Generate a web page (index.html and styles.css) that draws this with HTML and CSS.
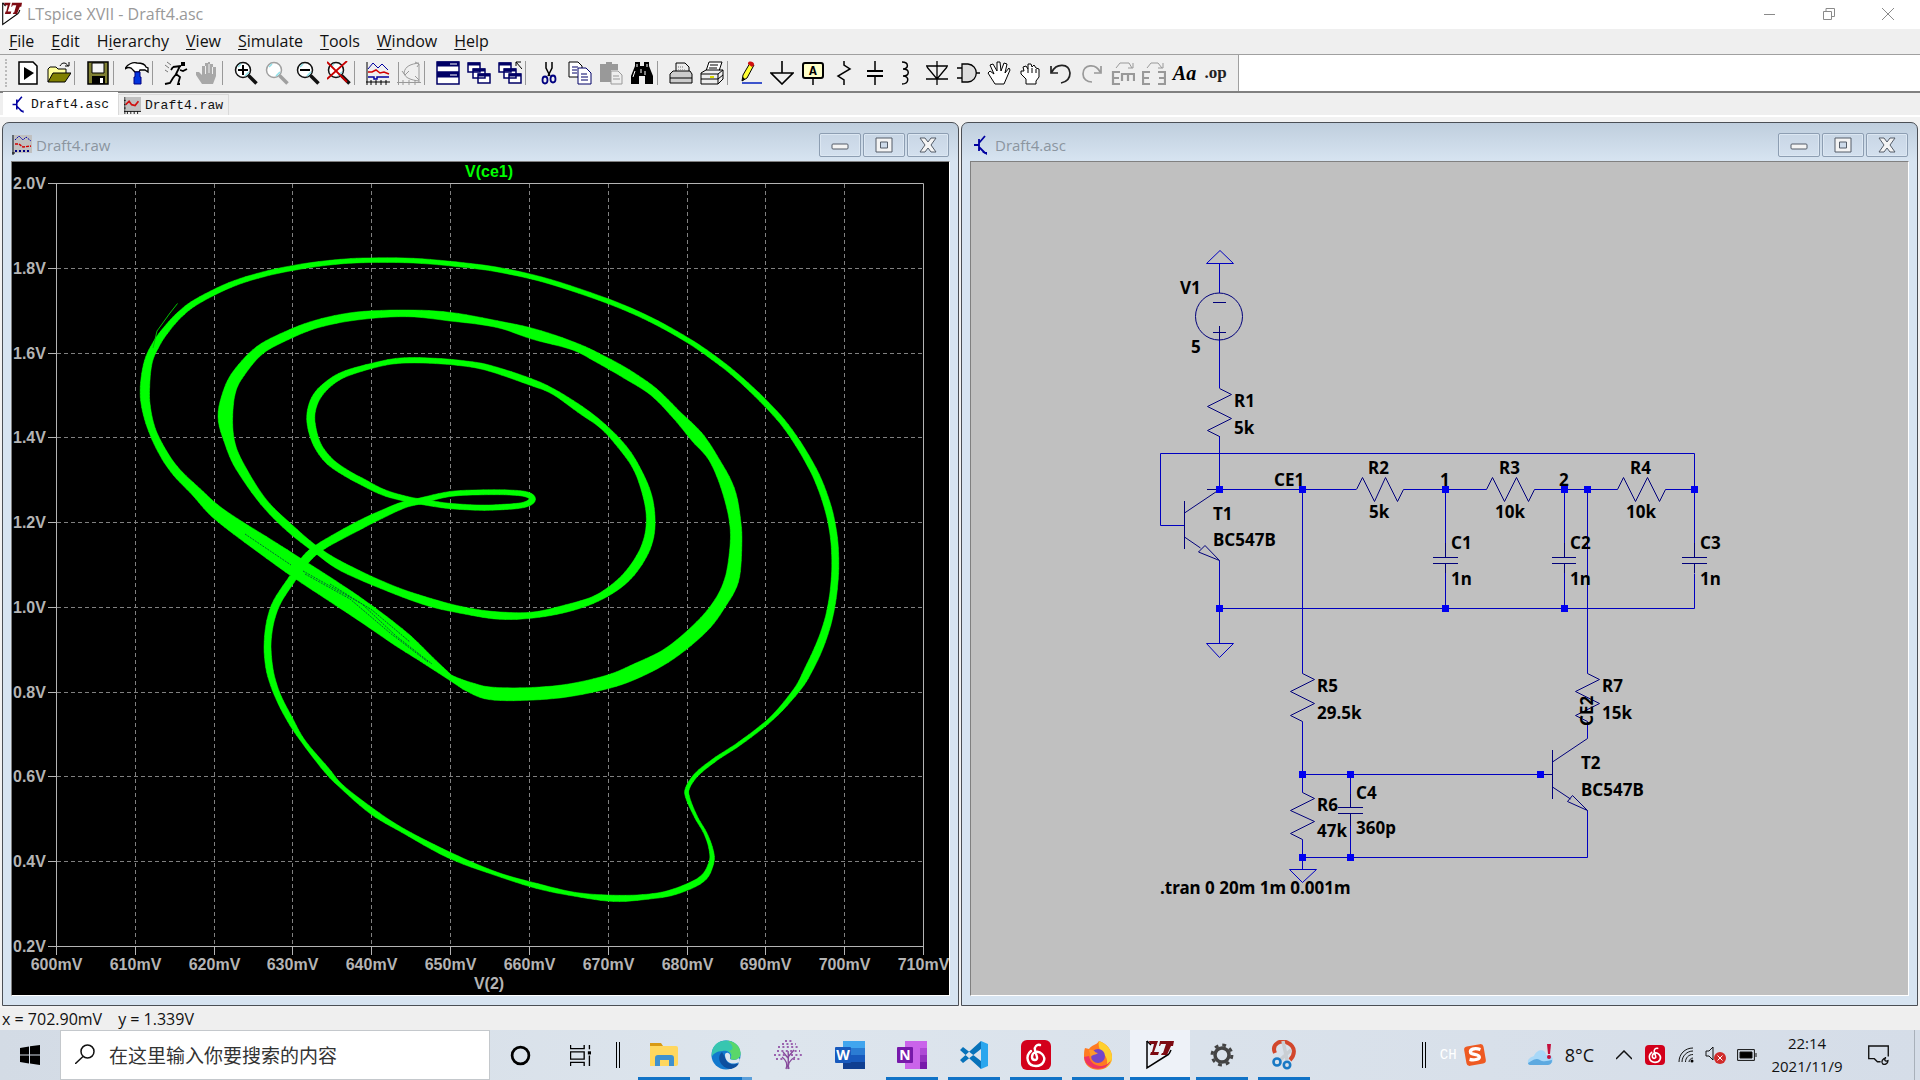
FILE: index.html
```html
<!DOCTYPE html>
<html lang="en">
<head>
<meta charset="utf-8">
<title>LTspice XVII - Draft4.asc</title>
<link rel="stylesheet" href="styles.css">
</head>
<body>
<svg class="defs" width="0" height="0" aria-hidden="true">
  <defs>
    <symbol id="lt" viewBox="0 0 28 30"><path d="M1 1v27L23 14" fill="none" stroke="#000" stroke-width="1.500"/><path d="M1 1l4 4M23 14l2-4" stroke="#000" stroke-width="1.500"/><path d="M3 1h9L8 12h5l-1 3H4l1-3h1l2-8H4zM14 1h14l-1 5h-2l-4 9h-6l1-2h1l3-9h-5l-1 2h-1z" fill="#7d0a12"/></symbol>
    <symbol id="bjt" viewBox="0 0 16 20"><path d="M1 10h5M6 4v12M6 8l6-7M6 12l6 6" stroke="#0000a0" stroke-width="1.800" fill="none"/><path d="M9 17h5v3z" fill="#0000a0"/></symbol>
    <symbol id="wave" viewBox="0 0 20 20"><path d="M2 0h18v17H2z" fill="#c0c0c0"/><path d="M1 0v20M0 17h20M4 17v3M8 17v3M12 17v3M16 17v3M0 4h2M0 9h2M0 13h2" stroke="#000"/><path d="M2 9l4-4 3 4 4 1 4-5" fill="none" stroke="#d01010" stroke-width="2"/></symbol>
    <symbol id="lens" viewBox="0 0 24 24"><circle cx="9" cy="9" r="7.500" fill="#fff" stroke="currentColor" stroke-width="1.500"/><path d="M4 6l3-3M11 15l4-4" stroke="#8fe0e8" stroke-width="1.500"/><path d="M14.500 14.500l8 8" stroke="currentColor" stroke-width="3.600"/></symbol>
    <symbol id="netease" viewBox="0 0 30 30"><rect width="30" height="30" rx="6" fill="#d3001b"/><path d="M19 5c-3-1-6 2-5 5l2 7c1 4-5 4-5 0 0-5 6-7 10-3 5 5 1 12-6 12C6 26 4 16 10 11" fill="none" stroke="#fff" stroke-width="2.400" stroke-linecap="round"/></symbol>
    <symbol id="cascade" viewBox="0 0 24 24"><g fill="#fff" stroke="#000066" stroke-width="1.500"><path d="M1 2h12v9H1zM6 8h12v9H6zM11 13h12v9H11z"/></g><path d="M1 3h12M6 9h12M11 14h12" stroke="#000066" stroke-width="3"/></symbol>
  </defs>
</svg>

<header class="titlebar">
  <svg class="app-icon" viewBox="0 0 28 30" preserveAspectRatio="none"><use href="#lt"/></svg>
  <h1 class="app-title">LTspice XVII - Draft4.asc</h1>
  <div class="caption">
    <button aria-label="Minimize"><svg viewBox="0 0 12 12"><path d="M0 6.500h11"/></svg></button>
    <button aria-label="Restore"><svg viewBox="0 0 12 12"><path d="M.5 3.500h8v8h-8zM3 3V.5h8.500v8H9"/></svg></button>
    <button aria-label="Close"><svg viewBox="0 0 12 12"><path d="M0 0l12 12M12 0L0 12"/></svg></button>
  </div>
</header>

<nav class="menubar">
  <button><u>F</u>ile</button><button><u>E</u>dit</button><button>H<u>i</u>erarchy</button><button><u>V</u>iew</button><button><u>S</u>imulate</button><button><u>T</u>ools</button><button><u>W</u>indow</button><button><u>H</u>elp</button>
</nav>

<div class="toolrow">
<div class="toolbar">
  <button aria-label="New"><svg viewBox="0 0 24 24"><path d="M3 1h14l4 4v18H3z" fill="#fff" stroke="#000" stroke-width="1.500"/><path d="M8 6v13l10-7z"/></svg></button>
  <button aria-label="Open"><svg viewBox="0 0 24 24"><path d="M1 21V8l2-2h6l2 2h8v5" fill="#ffff99" stroke="#000"/><path d="M1 21l5-9h18l-6 9z" fill="#808000" stroke="#000"/><path d="M13 5c2-4 6-4 8 0M22 1v4h-4" fill="none" stroke="#000"/></svg></button>
  <span class="sep"></span>
  <button aria-label="Save"><svg viewBox="0 0 24 24"><path d="M2 1h20v22H2z" fill="#808033" stroke="#000" stroke-width="1.500"/><path d="M6 2h12v10H6z" fill="#f4f4f4" stroke="#000"/><path d="M6 15h13v8H6z"/><path d="M14 17h3v5h-3z" fill="#fff"/></svg></button>
  <span class="sep"></span>
  <button aria-label="Control panel"><svg viewBox="0 0 24 24"><path d="M0 8c2-5 8-7 12-6 4 0 8 1 9 4l2 1v4l-3-2h-5l-1 2h-4L8 9C6 6 3 6 0 8z" fill="#fff" stroke="#000" stroke-width="1.300"/><path d="M10 11h5v5h1v7H9v-7h1z" fill="#0033dd" stroke="#000080"/></svg></button>
  <span class="sep"></span>
  <button aria-label="Run"><svg viewBox="0 0 24 24"><path d="M17 1h4v4h-4z"/><path d="M9 6l8-1M16 5l-4 8 4 3-2 7h2M13 12l-4 5-3 5-5 1M16 9l3 1 4-2M9 6L7 9" fill="none" stroke="#000" stroke-width="1.800"/><path d="M1 4l4 3M3 1l4 3M1 9l3 2" stroke="#777"/></svg></button>
  <button aria-label="Halt" disabled><svg viewBox="0 0 24 24"><path d="M7 23L1 14v-3h3l3 3V5h3V2h3v-1h2v2h3v3h3v9l-3 8z" fill="#a8a8a8"/><path d="M10.500 5v8M14 3v9M17.500 6v7" stroke="#eee"/></svg></button>
  <span class="sep"></span>
  <button aria-label="Zoom in"><svg viewBox="0 0 24 24"><use href="#lens"/><path d="M9 4v10M4 9h10" stroke="#000" stroke-width="2"/></svg></button>
  <button aria-label="Pan" disabled><svg viewBox="0 0 24 24"><use href="#lens"/></svg></button>
  <button aria-label="Zoom out"><svg viewBox="0 0 24 24"><use href="#lens"/><path d="M4 9h10" stroke="#000" stroke-width="2"/></svg></button>
  <button aria-label="Zoom full"><svg viewBox="0 0 24 24"><use href="#lens"/><path d="M0 1l20 20M20 0L0 18" stroke="#c80000" stroke-width="1.800"/></svg></button>
  <span class="sep"></span>
  <button aria-label="Autorange"><svg viewBox="0 0 24 24"><path d="M1 1v23M0 21h24M5 19v5M10 19v5M15 19v5M20 19v5" stroke="#000"/><path d="M2 8l5-6 5 5 4-4 6 6" stroke="#0000a0" fill="none"/><path d="M2 11h4l4-2 4 3 4-1 5 2" stroke="#d00000" fill="none" stroke-width="1.500"/><path d="M2 16h6v2h3v-2h12" stroke="#0000a0" fill="none" stroke-width="1.500"/></svg></button>
  <button aria-label="Eye diagram" disabled><svg viewBox="0 0 24 24"><path d="M1.500 1v23M0 21.500h24M6 19v5M12 19v5M18 19v5M22 3v18M7 12c1-7 7-9 15-10M7 12c1 5 7 7 15 8M5 10l3 4 4-4M18 1l4 2-2 3M18 15l4 4" fill="none" stroke="#999"/></svg></button>
  <span class="sep"></span>
  <button aria-label="Tile"><svg viewBox="0 0 24 24"><path d="M1 1h22v10H1zM1 12h22v11H1z" fill="#fff" stroke="#000066" stroke-width="1.500"/><path d="M1 3h22M1 14h22" stroke="#000066" stroke-width="5"/><path d="M14 3h7M14 14h7" stroke="#fff"/></svg></button>
  <button aria-label="Cascade"><svg viewBox="0 0 24 24"><use href="#cascade"/></svg></button>
  <button aria-label="Close all"><svg viewBox="0 0 24 24"><use href="#cascade"/><path d="M18 1h5M18 1v4M18 1l6 7" stroke="#000" fill="none"/></svg></button>
  <span class="sep"></span>
  <button aria-label="Cut"><svg viewBox="0 0 24 24"><path d="M9 1v6l4 8M15 1v6l-4 8" fill="none" stroke="#000" stroke-width="1.500"/><ellipse cx="8" cy="19" rx="2.500" ry="3.500" fill="none" stroke="#000080" stroke-width="1.800"/><ellipse cx="16" cy="18" rx="2.500" ry="3.500" fill="none" stroke="#000080" stroke-width="1.800"/></svg></button>
  <button aria-label="Copy"><svg viewBox="0 0 24 24"><g fill="#fff" stroke="#000"><path d="M1 1h9l4 4v11H1z"/><path d="M10 7h8l5 5v11H10z" stroke="#000066"/></g><path d="M4 6h6M4 9h5M4 12h5M13 13h6M13 16h7M13 19h7" stroke="#000066"/></svg></button>
  <button aria-label="Paste" disabled><svg viewBox="0 0 24 24"><path d="M1 3h6V1h6v2h6v6h-7v12H1z" fill="#999"/><path d="M12 10h7l4 4v9H12z" fill="#eee" stroke="#999"/><path d="M14 15h6M14 18h7" stroke="#999"/></svg></button>
  <button aria-label="Find"><svg viewBox="0 0 24 24"><path d="M5 1h5v4h4V1h5v4l4 10v8h-8v-8h-6v8H1v-8L5 5z"/><path d="M7 3v3M17 3v3M5 10l-2 6M15 10v4M11 8v4" stroke="#fff"/></svg></button>
  <span class="sep"></span>
  <button aria-label="Print"><svg viewBox="0 0 24 24"><path d="M7 11V2h9l4 4v5" fill="#eee" stroke="#000"/><path d="M1 13l3-3h17l2 3v9H1zM1 17h22" fill="#ccc" stroke="#000"/><path d="M9 6h6M9 9h8" stroke="#777" stroke-dasharray="1 1"/></svg></button>
  <button aria-label="Print preview"><svg viewBox="0 0 24 24"><path d="M6 10l3-9h13l-3 9" fill="#fff" stroke="#000"/><path d="M1 12l5-3h17v9l-5 5H1zM1 13h17l5-4M18 13v10M1 18h17l5-4" fill="#eee" stroke="#000"/><path d="M10 4h8M9 7h8" stroke="#000"/><path d="M10 16h4" stroke="#dd0" stroke-width="2"/></svg></button>
  <span class="sep"></span>
  <button aria-label="Wire"><svg viewBox="0 0 24 24"><path d="M3 20l1-6 7-12 4 2-7 13z" fill="#ff3" stroke="#000"/><path d="M9 2c1-3 7-1 6 2l-2 2-4-3z" fill="#d01010"/><path d="M3 20l1-4 2 2z"/><path d="M3 22h20" stroke="#0020c0" stroke-width="1.500"/></svg></button>
  <button aria-label="Ground"><svg viewBox="0 0 24 24"><path d="M12 0v12M1 12h22L12 23z" fill="none" stroke="#000" stroke-width="1.600"/></svg></button>
  <button aria-label="Label net"><svg viewBox="0 0 24 24"><rect x="2" y="2" width="20" height="15" rx="2" fill="#ffffc8" stroke="#000" stroke-width="2"/><path d="M12 17v7" stroke="#000" stroke-width="1.500"/><text x="12" y="14" class="glyph-a">A</text></svg></button>
  <button aria-label="Resistor"><svg viewBox="0 0 24 24"><path d="M12 0v4l6 4-12 7 6 4v5" fill="none" stroke="#000" stroke-width="1.500"/></svg></button>
  <button aria-label="Capacitor"><svg viewBox="0 0 24 24"><path d="M12 0v10M12 15v9" stroke="#000" stroke-width="1.500"/><path d="M4 10h16M4 15h16" stroke="#000" stroke-width="2.200"/></svg></button>
  <button aria-label="Inductor"><svg viewBox="0 0 24 24"><path d="M8 1c7 0 7 7 1 7 7 0 7 7 0 7 7 0 6 8-1 8" fill="none" stroke="#000" stroke-width="1.500"/></svg></button>
  <button aria-label="Diode"><svg viewBox="0 0 24 24"><path d="M12 0v24M1 5h22M2 6l10 12L22 6M1 18h22" fill="none" stroke="#000" stroke-width="1.300"/></svg></button>
  <button aria-label="Component"><svg viewBox="0 0 24 24"><path d="M6 3h6c11 1 11 17 0 18H6z" fill="#ddd" stroke="#000" stroke-width="1.300"/><path d="M1 7h5M1 17h5M20 12h4" stroke="#000" stroke-width="1.500"/></svg></button>
  <button aria-label="Move"><svg viewBox="0 0 24 24"><path d="M8 23L1 12l2-2 4 3-4-9 3-1 4 7V1h3l1 9 3-8 3 1-2 9 4-5 1 2-6 14z" fill="#fff" stroke="#000"/></svg></button>
  <button aria-label="Drag"><svg viewBox="0 0 24 24"><path d="M8 23v-5l-5-5v-3h3l-1-4 3-1 2 3V3h3l1 3 2-2 2 3 3 1v8l-3 4v3z" fill="#fff" stroke="#000"/><path d="M10 8v4M14 7v5M18 8v4" stroke="#000"/></svg></button>
  <button aria-label="Undo"><svg viewBox="0 0 24 24"><path d="M3 11c4-9 17-9 18 1 0 6-4 9-9 10M2 5v7h7" fill="none" stroke="#222" stroke-width="1.700"/></svg></button>
  <button aria-label="Redo" disabled><svg viewBox="0 0 24 24"><path d="M20 11C16 2 3 3 3 13c0 5 4 8 9 8M21 5v7h-7" fill="none" stroke="#999" stroke-width="1.700"/></svg></button>
  <button aria-label="Rotate" disabled><svg viewBox="0 0 24 24"><path d="M9 11H2v12h7M2 17h6M11 20v-7h12v7M17 13v7" fill="none" stroke="#999" stroke-width="2.200"/><path d="M5 7l4-5h9l3 5M22 2v5h-5" fill="none" stroke="#999"/></svg></button>
  <button aria-label="Mirror" disabled><svg viewBox="0 0 24 24"><path d="M8 11H1v12h7M1 17h6M16 11h7v12h-7M23 17h-6" fill="none" stroke="#999" stroke-width="2.200"/><path d="M5 7l4-5h7l4 5M21 2v5h-5" fill="none" stroke="#999"/></svg></button>
  <button class="txt-aa" aria-label="Text">Aa</button>
  <button class="txt-op" aria-label="Spice directive">.op</button>
</div>
</div>

<div class="tabs">
  <button class="tab active"><svg viewBox="0 0 16 20"><use href="#bjt"/></svg>Draft4.asc</button>
  <button class="tab"><svg viewBox="0 0 20 20"><use href="#wave"/></svg>Draft4.raw</button>
</div>

<main class="desktop">
  <section class="window">
    <div class="wtitle">
      <svg class="wicon" viewBox="0 0 20 20"><path d="M2 0h18v18H2z" fill="#c0c0c0"/><path d="M1 0v20M0 18h3" stroke="#000"/><path d="M3 5l4-4 4 4 3-3 5 4" fill="none" stroke="#0000b0" stroke-dasharray="2 1"/><path d="M3 9h4l4 3 8-1" fill="none" stroke="#d00000" stroke-width="1.500" stroke-dasharray="3 1"/><path d="M3 16h16" stroke="#000080" stroke-width="2" stroke-dasharray="2 2"/></svg>
      <h2>Draft4.raw</h2>
      <div class="wbuttons">
        <button aria-label="Minimize"><svg viewBox="0 0 20 20"><rect x="2" y="9" width="16" height="5" rx="1"/></svg></button>
        <button aria-label="Maximize"><svg viewBox="0 0 20 20"><path fill-rule="evenodd" d="M2 3h16v14H2zM6.500 7v6h7V7z"/></svg></button>
        <button aria-label="Close"><svg viewBox="0 0 20 20"><path d="M2 3h5l3 4 3-4h5l-5 7 5 7h-5l-3-4-3 4H2l5-7z"/></svg></button>
      </div>
    </div>
    <div class="client plot">
      <svg viewBox="12 162 937 833" role="img" aria-label="V(ce1) against V(2)">
        <g id="grid"></g>
        <path id="trace" fill="#00ff00"/>
        <path d="M177.500 303.500L170 313 157 331 153 348" fill="none" stroke="#00c000"/>
        <path d="M303 571L362 604 396 636 432 664M305 574L350 599 390 633 428 662M330 584L372 610 410 642M245 534L291 565" fill="none" stroke="#063" stroke-width="1" stroke-dasharray="2 1"/>
        <text x="489" y="177" class="trace-name">V(ce1)</text>
        <g id="labels"></g>
        <text x="489" y="989" class="mid">V(2)</text>
      </svg>
    </div>
  </section>

  <section class="window">
    <div class="wtitle">
      <svg class="wicon" viewBox="0 0 16 20"><use href="#bjt"/></svg>
      <h2>Draft4.asc</h2>
      <div class="wbuttons">
        <button aria-label="Minimize"><svg viewBox="0 0 20 20"><rect x="2" y="9" width="16" height="5" rx="1"/></svg></button>
        <button aria-label="Maximize"><svg viewBox="0 0 20 20"><path fill-rule="evenodd" d="M2 3h16v14H2zM6.500 7v6h7V7z"/></svg></button>
        <button aria-label="Close"><svg viewBox="0 0 20 20"><path d="M2 3h5l3 4 3-4h5l-5 7 5 7h-5l-3-4-3 4H2l5-7z"/></svg></button>
      </div>
    </div>
    <div class="client schematic">
      <svg viewBox="971 162 937 833" role="img" aria-label="Circuit schematic">
        <path class="wire" d="M1219.500 263.500V293M1206.500 263.500h27l-13.500-13zM1219.500 340v48M1219.500 436v53.500H1356M1184.500 525.500h-24v-72h534v90M1403.500 489.500h83M1534.500 489.500h83M1665.500 489.500h29M1219.500 560.500v83M1206.500 643.500h27l-14 14zM1219.500 608.500h475v-35M1445.500 489.500V543M1445.500 573v35M1564.500 489.500V543M1564.500 573v35M1587.500 489.500v184M1302.500 489.500v184M1302.500 721.500v71M1587.500 721.500v17M1302.500 774.500h238M1302.500 839.500v30M1289.500 869.500h27l-14 13zM1350.500 774.500v20M1350.500 826v31.500M1302.500 857.500h285v-47"/>
        <g class="sym">
          <circle cx="1219" cy="316.500" r="23.500"/>
          <path d="M1213 302.500h13M1213 332.500h13M1219.500 326v14"/>
          <path d="M1219.500 388.500l12 6-24 12 24 12-24 12 12 6"/>
          <path d="M1356.500 489.500l6-12 12 24 11-24 12 24 6-12M1486.500 489.500l6-12 12 24 12-24 12 24 6-12M1617.500 489.500l6-12 12 24 12-24 12 24 6-12"/>
          <path d="M1302.500 673.500l12 6-24 12 24 12-24 12 12 6M1587.500 673.500l12 6-24 12 24 12-24 12 12 6M1302.500 792.500l12 6-24 12 24 11-24 12 12 6"/>
          <path d="M1184.500 501v48M1207 489.500h12M1184.500 513l35-23.500M1184.500 537l16 11M1219.500 560.500l-14.500-15-6.500 6.500z"/>
          <path d="M1540.500 774.500h12M1552.500 750v49M1552.500 762l35-23.500M1552.500 787l18 12M1587.500 810.500l-15-15-5 6z"/>
          <path d="M1433 557.500h25M1433 563.500h25M1445.500 543v14M1445.500 564v9M1552 557.500h24M1552 563.500h24M1564.500 543v14M1564.500 564v9M1682 557.500h25M1682 563.500h25M1694.500 543v14M1694.500 564v9M1338 807.500h25M1338 813.500h25M1350.500 794v13M1350.500 814v12"/>
        </g>
        <path class="node" d="M1216 486h7v7h-7zM1299 486h7v7h-7zM1442 486h7v7h-7zM1561 486h7v7h-7zM1584 486h7v7h-7zM1691 486h7v7h-7zM1216 605h7v7h-7zM1442 605h7v7h-7zM1561 605h7v7h-7zM1299 771h7v7h-7zM1347 771h7v7h-7zM1537 771h7v7h-7zM1299 854h7v7h-7zM1347 854h7v7h-7z"/>
        <g class="ctext">
          <text x="1180" y="294">V1</text><text x="1191" y="353">5</text>
          <text x="1234" y="407">R1</text><text x="1234" y="434">5k</text>
          <text x="1274" y="486">CE1</text>
          <text x="1368" y="474">R2</text><text x="1369" y="518">5k</text>
          <text x="1213" y="520">T1</text><text x="1213" y="546">BC547B</text>
          <text x="1440" y="486">1</text><text x="1559" y="486">2</text>
          <text x="1499" y="474">R3</text><text x="1495" y="518">10k</text>
          <text x="1630" y="474">R4</text><text x="1626" y="518">10k</text>
          <text x="1451" y="549">C1</text><text x="1451" y="585">1n</text>
          <text x="1570" y="549">C2</text><text x="1570" y="585">1n</text>
          <text x="1700" y="549">C3</text><text x="1700" y="585">1n</text>
          <text x="1602" y="692">R7</text><text x="1602" y="719">15k</text>
          <text transform="translate(1593 726) rotate(-90)">CE2</text>
          <text x="1581" y="769">T2</text><text x="1581" y="796">BC547B</text>
          <text x="1317" y="692">R5</text><text x="1317" y="719">29.5k</text>
          <text x="1317" y="811">R6</text><text x="1317" y="837">47k</text>
          <text x="1356" y="799">C4</text><text x="1356" y="834">360p</text>
          <text x="1160" y="894">.tran 0 20m 1m 0.001m</text>
        </g>
      </svg>
    </div>
  </section>
</main>

<div class="status"><span>x = 702.90mV</span><span>y = 1.339V</span></div>

<footer class="taskbar">
  <button class="start" aria-label="Start"><svg viewBox="0 0 20 20"><path d="M0 3l9-1.500V9.500H0zM10 1.300L20 0v9.500H10zM0 10.500h9v8L0 17zM10 10.500h10V20l-10-1.500z"/></svg></button>
  <label class="search"><svg viewBox="0 0 20 20"><circle cx="12.500" cy="7.500" r="6.500"/><path d="M8 12.500L0 20"/></svg><input type="text" placeholder="在这里输入你要搜索的内容" aria-label="Search"></label>
  <button class="tb" aria-label="Cortana"><svg class="i20" viewBox="0 0 20 20"><circle cx="10" cy="10" r="8" fill="none" stroke="#000" stroke-width="2.600"/></svg></button>
  <button class="tb" aria-label="Task view"><svg class="i20" viewBox="0 0 20 20"><path d="M.5 0v3.500h13V0M.5 20v-3.500h13V20M.5 6.500h13v7H.5zM18.500 0v4M18.500 10v10" fill="none" stroke="#000" stroke-width="1.300"/><path d="M17 6h3v3h-3z"/></svg></button>
  <span class="grip"></span>
  <div class="apps">
    <button class="app run" aria-label="File Explorer"><svg viewBox="0 0 30 30"><path d="M1 3h11l2 3h-6L1 9z" fill="#d89a14"/><path d="M1 6h26q2 0 2 2v16q0 2-2 2H1z" fill="#ffd75e"/><path d="M6 26V18q0-3 3-3h13q3 0 3 3v8h-5v-6h-9v6z" fill="#3f91cf"/></svg></button>
    <button class="app run multi" aria-label="Edge"><svg viewBox="0 0 30 30"><circle cx="15" cy="15" r="14.500" fill="#1279ce"/><path d="M1 12C3-4 29-3 29.500 13c0 6-5 8-10 6 2-6-3-9-8-8C6 11 2 14 .6 17z" fill="#37c6b0"/><path d="M17 1c8 1 12 6 12.500 12 0 6-5 8-10 6 2-4 1-7-2-8C24 10 22 5 17 1z" fill="#5ad76a"/><path d="M11 12c-6 5-2 16 9 17 4-1 7-3 8-6-6 3-12 1-13-4z" fill="#0d4f9f"/><path d="M14 15c0-4 7-3 5 4 3 2 7 1 9-1 1 1 1 3 0 4-7 4-14 0-14-7z" fill="#dde5ee"/></svg></button>
    <button class="app" aria-label="Tree"><svg viewBox="0 0 30 30"><path d="M13 29c2-5 0-9-4-12M15 29c0-8 1-12 0-18M16 29c-2-5 1-9 6-12M15 18l-5-6M15 17l6-7" stroke="#874b9b" stroke-width="1.400" fill="none"/><path d="M4 11h23M1 15h12M18 15h12M5 7h20M9 4h14M3 19h7M20 19h8M12 1h8" stroke="#9a62ae" stroke-width="2.200" stroke-dasharray="2 2.400"/></svg></button>
    <button class="app" aria-label="Word"><svg viewBox="0 0 30 30"><path d="M8 1h22v8H8z" fill="#41a5ee"/><path d="M8 8h22v7H8z" fill="#2b7cd3"/><path d="M8 15h22v7H8z" fill="#185abd"/><path d="M8 22h22v7H8z" fill="#103f91"/><rect x="0" y="7" width="16" height="16" rx="1" fill="#185abd"/><text x="8" y="20" class="tile">W</text></svg></button>
    <button class="app run" aria-label="OneNote"><svg viewBox="0 0 30 30"><path d="M8 1h22v28H8z" fill="#ca64ea"/><path d="M23 8h7v7h-7z" fill="#ae4bd5"/><path d="M23 15h7v7h-7z" fill="#9332bf"/><path d="M23 22h7v7h-7z" fill="#7719aa"/><rect x="0" y="7" width="16" height="16" rx="1" fill="#7719aa"/><text x="8" y="20" class="tile">N</text></svg></button>
    <button class="app run" aria-label="VS Code"><svg viewBox="0 0 30 30"><path d="M22 1l7 3v22l-7 3z" fill="#2aa6ee"/><path d="M22 1v8L4 23l-3-3zM22 29v-8L4 7 1 10z" fill="#0873ba"/></svg></button>
    <button class="app run" aria-label="NetEase Music"><svg viewBox="0 0 30 30"><use href="#netease"/></svg></button>
    <button class="app run" aria-label="Firefox"><svg viewBox="0 0 30 30"><path d="M2 8l4 1c2-4 8-4 10-8 8 3 13 9 13 16 0 17-28 17-28 0 0-4 0-6 1-9z" fill="#ff7b22"/><path d="M16 1c8 3 13 9 13 16 0 5-2 8-6 11 3-8 0-13-5-16-2-4-3-7-2-11z" fill="#ffd02e"/><path d="M1 17c2 15 24 15 27 3-5 9-20 8-22-4z" fill="#ee3463"/><circle cx="15" cy="16" r="7" fill="#7547c8"/><path d="M6 10c6-1 5 3 9 3-4 3-7 1-7 5z" fill="#ff9b2a"/></svg></button>
    <button class="app run active" aria-label="LTspice"><svg viewBox="0 0 28 30"><use href="#lt"/></svg></button>
    <button class="app run" aria-label="Settings"><svg viewBox="0 0 30 30"><circle cx="15" cy="15" r="7" fill="none" stroke="#444" stroke-width="3.500"/><circle cx="15" cy="15" r="9.900" fill="none" stroke="#444" stroke-width="3" stroke-dasharray="3.800 3.975"/></svg></button>
    <button class="app run" aria-label="Snipping Tool"><svg viewBox="0 0 30 30"><path d="M6 13C2 4 12-1 19 3c8 4 7 12 2 17" fill="none" stroke="#d2472c" stroke-width="4"/><path d="M14 1l4 19M22 10l-11 10" stroke="#c9ced3" stroke-width="3.500"/><circle cx="8" cy="22" r="3.500" fill="none" stroke="#1979c4" stroke-width="2.600"/><circle cx="18" cy="25" r="3.200" fill="none" stroke="#1979c4" stroke-width="2.600"/></svg></button>
  </div>

  <div class="tray">
    <span class="grip"></span>
    <span class="lang">CH</span>
    <button class="sogou" aria-label="Sogou input"><svg viewBox="0 0 22 22"><rect x="2" y="2" width="18" height="18" rx="3" fill="#ee5a22" transform="rotate(-10 11 11)"/><path d="M16 6c-6-2-10 0-9 3 1 2 8 1 8 4 0 2-5 3-9 2" fill="none" stroke="#fff" stroke-width="3"/></svg></button>
    <button class="weather"><svg viewBox="0 0 28 24"><path d="M1 20c-1-4 3-6 6-7 3-8 12-7 12-1 6-1 8 4 6 8z" fill="#a8d8f8"/><path d="M1 20c3-1 7-6 12-3 4 3 9 0 12 0 0 4-2 5-5 5H4q-3 0-3-2z" fill="#5da9e0"/><path d="M20 1h4l-1 10h-2z" fill="#c50f3c"/><circle cx="22" cy="14" r="2" fill="#c50f3c"/></svg>8°C</button>
    <button class="t-chev" aria-label="Show hidden icons"><svg viewBox="0 0 16 10"><path d="M0 9l8-8 8 8"/></svg></button>
    <button class="t-net" aria-label="NetEase"><svg viewBox="0 0 30 30"><use href="#netease"/></svg></button>
    <button class="t-wifi" aria-label="Network"><svg viewBox="0 0 16 16"><path d="M1 15C1 7 7 1 15 1M4 15c0-6 5-11 11-11M7.500 15c0-4 3-7.500 7.500-7.500M11 15c0-2 2-4 4-4"/><circle cx="14" cy="14" r="1.500" fill="#000" stroke="none"/></svg></button>
    <button class="t-vol" aria-label="Volume"><svg viewBox="0 0 22 18"><path d="M1 5h3l4-4v13l-4-4H1z"/><circle cx="15" cy="12" r="6" fill="#d02b2b" stroke="none"/><path d="M12.500 9.500l5 5M17.500 9.500l-5 5" stroke="#fff"/></svg></button>
    <button class="t-bat" aria-label="Battery"><svg viewBox="0 0 20 12"><path d="M.6.600h16.800v10.800H.6zM19 4v4"/><path d="M3 3h12v6H3z" fill="#000"/></svg></button>
    <button class="clock"><time>22:14</time><time>2021/11/9</time></button>
    <button class="t-note" aria-label="Notifications"><svg viewBox="0 0 20 20"><path d="M12 16H9l-3-3H.7V1h18.600v10"/><path d="M17 12c-3 1-5 4-3 6 2 1 5 0 5-3-3 1-4-1-2-3z"/></svg></button>
    <span class="peek"></span>
  </div>
</footer>
<script src="plot.js"></script>
</body>
</html>
```
FILE: styles.css
```css
* { box-sizing: border-box; }
body {
  margin: 0;
  min-height: 100vh;
  display: flex;
  flex-direction: column;
  background: #efefef;
  color: #111;
  font-family: "Open Sans", "Noto Sans", "Noto Sans CJK SC", sans-serif;
  font-size: 15px;
}
button {
  margin: 0; padding: 0; border: 0; background: none;
  color: inherit; font: inherit;
}
svg { display: block; }
.defs { position: absolute; }

.titlebar { display: flex; align-items: center; height: 29px; padding-bottom: 2px; background: #fff; color: #999; }
.app-icon { width: 20px; height: 24px; margin-left: 2px; }
.app-title { margin: 0 0 0 5px; font-size: 16px; line-height: 24px; font-weight: 400; }
.caption { display: flex; margin-left: auto; padding-right: 3px; }
.caption button { width: 59px; height: 27px; display: grid; place-items: center; }
.caption svg { width: 12px; height: 12px; fill: none; stroke: #8a8a8a; }

.menubar { display: flex; gap: 17px; height: 26px; padding: 0 0 2px 9px; border-bottom: 1px solid #a0a0a0; align-items: center; font-size: 16px; line-height: 22px; }
.menubar u { text-underline-offset: 2px; }

.toolrow { background: #fff; border-bottom: 2px solid #808080; display: flex; }
.toolbar {
  display: flex; align-items: center; height: 36px; padding: 0 7px 0 12px;
  background: #efefef; border-right: 1px solid #a0a0a0;
}
.toolbar::before { content: ""; height: 28px; border-left: 2px dotted #bbb; margin: 0 5px 0 -7px; }
.toolbar button { width: 31px; height: 32px; display: grid; place-items: center; }
.toolbar svg { width: 24px; height: 24px; }
.toolbar button:disabled { color: #a0a0a0; }
.toolbar .sep { width: 8px; height: 24px; border-left: 1px solid #999; border-right: 7px solid transparent; }
.glyph-a { font: bold 13px "Liberation Mono", monospace; text-anchor: middle; }
.toolbar .txt-aa { font: italic bold 20px "Liberation Serif", serif; color: #000; }
.toolbar .txt-op { font: bold 17px "Liberation Serif", serif; color: #222; }

.tabs { display: flex; align-items: flex-end; height: 24px; padding-left: 3px; border-bottom: 2px solid #fff; }
.tab {
  display: flex; align-items: center; gap: 4px; height: 21px; padding: 0 5px;
  border: 1px solid #d9d9d9; border-bottom: 0;
  font-family: "Liberation Mono", "Noto Sans CJK SC", monospace; font-size: 13px;
}
.tab.active { height: 23px; padding: 0 8px 0 6px; background: #fff; border-color: #fff; }
.tab svg { width: 17px; height: 17px; }

.desktop { flex: 1; display: grid; grid-template-columns: 1fr 1fr; gap: 2px; padding: 5px 2px 2px; background: #f2f2f2; }
.window {
  display: flex; flex-direction: column; min-width: 0;
  padding: 0 8px 9px; border: 1px solid #4b4f55; border-radius: 7px 7px 0 0;
  background: linear-gradient(#bfcedd, #d7e4f1 38px);
}
.wtitle { display: flex; align-items: center; height: 38px; padding: 6px 1px 0; }
.wicon { width: 20px; height: 20px; }
.wtitle h2 { margin: 0 0 0 4px; font-size: 15px; font-weight: 400; color: #8b959f; }
.wbuttons { display: flex; gap: 2px; margin-left: auto; }
.wbuttons button {
  width: 42px; height: 24px; display: grid; place-items: center;
  border: 1px solid #8d9eb2; border-radius: 2px; background: linear-gradient(#c8d6e5, #d3e0ee);
  box-shadow: inset 0 0 0 1px #dce7f2;
}
.wbuttons svg { width: 20px; height: 20px; fill: #f4f4f4; stroke: #555d68; stroke-width: 1; }
.client { flex: 1; min-height: 0; border: 1px solid #fff; border-top-color: #808080; border-left-color: #808080; }
.client svg { width: 100%; height: 100%; }
.plot { background: #000; }
.plot text { font: bold 16px "Liberation Sans", Arial, sans-serif; fill: #b4b4b4; }
.plot .mid { text-anchor: middle; }
.plot .trace-name { fill: #00ff00; text-anchor: middle; }
.schematic { background: #c0c0c0; }
.wire { fill: none; stroke: #0000c0; }
.sym { fill: none; stroke: #00007a; }
.node { fill: #0000f0; }
.ctext { font: 700 17px "Noto Sans", "Open Sans", sans-serif; }

.status { display: flex; gap: 16px; height: 22px; align-items: center; padding-left: 2px; font-size: 16px; line-height: 22px; }

.taskbar {
  display: flex; align-items: stretch; height: 50px; color: #111;
  background: linear-gradient(90deg, #d3dbe5, #dde5ed 40%, #d5dde8);
}
.start { width: 60px; display: grid; place-items: center; }
.start svg { width: 20px; height: 20px; }
.search { display: flex; align-items: center; gap: 14px; width: 430px; padding: 0 0 2px 14px; background: #fff; border: 1px solid #c4c8cc; }
.search svg { width: 20px; height: 20px; fill: none; stroke: #111; stroke-width: 1.5px; }
.search input {
  flex: 1; min-width: 0; border: 0; padding: 0; outline: 0; background: none;
  font-family: "Noto Sans CJK SC", sans-serif; font-size: 19px;
}
.search input::placeholder { color: #333; opacity: 1; }
.tb { width: 60px; display: grid; place-items: center; }
.i20 { width: 21px; height: 21px; }
.grip { width: 4px; height: 26px; margin: 12px 0; border: solid #000; border-width: 0 1px; }
.tb + .grip { margin-left: 6px; }
.apps { display: flex; margin-left: 13px; }
.app { width: 62px; padding: 0 5px; display: grid; align-items: center; justify-items: center; }
.app svg { width: 30px; height: 30px; }
.run { background: linear-gradient(#1173c7, #1173c7) center bottom / 52px 3px no-repeat; }
.multi { background: linear-gradient(90deg, #1173c7 42px, #5b9fda 42px) center bottom / 52px 3px no-repeat; }
.active.app { background: linear-gradient(#1173c7, #1173c7) center bottom / 60px 3px no-repeat, linear-gradient(#eef2f8, #eef2f8) center / 60px 100% no-repeat; }
.tile { font: bold 14px "Open Sans", sans-serif; fill: #fff; text-anchor: middle; }

.tray { display: flex; align-items: center; margin-left: auto; }
.lang { margin-left: 14px; color: #fff; font: 14px "Liberation Mono", monospace; }
.sogou { margin-left: 6px; }
.sogou svg { width: 24px; height: 24px; }
.weather { display: flex; align-items: center; gap: 10px; margin-left: 40px; font-size: 18px; }
.weather svg { width: 28px; height: 24px; }
.t-chev { margin-left: 22px; }
.t-chev svg { width: 16px; height: 10px; fill: none; stroke: #111; stroke-width: 1.5px; }
.t-net { margin-left: 13px; }
.t-net svg { width: 20px; height: 20px; }
.t-wifi { margin-left: 13px; }
.t-wifi svg { width: 16px; height: 16px; fill: none; stroke: #111; }
.t-vol { margin-left: 11px; }
.t-vol svg { width: 22px; height: 18px; fill: none; stroke: #111; }
.t-bat { margin-left: 10px; }
.t-bat svg { width: 20px; height: 12px; fill: none; stroke: #111; }
.clock { display: flex; flex-direction: column; width: 76px; margin-left: 12px; line-height: 23px; text-align: center; white-space: nowrap; font-size: 15px; }
.t-note { margin-left: 23px; }
.t-note svg { width: 21px; height: 21px; fill: none; stroke: #111; stroke-width: 1.3px; }
.peek { width: 6px; height: 50px; margin-left: 25px; border-left: 1px solid #a8b0ba; }
```
FILE: plot.js
```js
// Orbit samples: each run has an origin and a scale, then [x, y, line width] triples.
const runs = [
  { o: [130, 240], s: [3, 3], p: [[960,1312,16],[900,1265,30],[850,1225,44],[800,1187,54],[700,1115,60],[600,1048,62],[500,983,60],[410,922,54],[310,854,44],[250,808,38],[200,757,30],[140,697,26],[100,640,24],[66,570,22],[48,500,26],[45,440,28],[55,365,24],[80,310,22],[110,267,20],[150,223,18],[200,185,17],[300,135,16],[400,103,15],[500,82,15],[600,68,14],[700,61,14],[850,62,14],[1000,75,14],[1120,92,14]] },
  { o: [500, 240], s: [3, 3], p: [[150,125,14],[325,184,14],[450,238,14],[562,300,14],[640,353,15],[710,408,15],[800,493,17],[870,575,18],[940,690,20],[980,790,21],[1000,880,21],[1006,970,21],[1000,1060,21],[985,1140,22],[960,1215,24],[925,1290,24],[890,1350,18],[815,1435,12]] },
  { o: [250, 560], s: [2.613, 3], p: [[1280,550,11],[1220,595,11],[1170,640,12],[1145,680,12],[1143,710,12],[1165,770,9],[1190,820,9],[1205,870,12],[1205,910,15],[1180,958,19],[1110,995,18],[1040,1010,15],[950,1015,19],[850,1003,12],[750,978,15],[640,940,11],[520,885,18],[400,812,13],[320,755,18],[240,680,12],[200,630,17],[140,545,12],[105,480,18],[70,400,18],[50,320,21],[47,230,21],[65,140,23],[108,60,22]] },
  { o: [130, 240], s: [3, 3], p: [[530,955,26],[580,915,24],[680,860,26],[740,830,24],[820,795,20],[870,783,18],[960,762,15],[1060,757,15],[1150,758,15],[1195,765,16],[1207,780,18],[1180,795,16],[1120,801,16],[1050,803,16],[960,798,16],[890,788,16],[830,777,16],[760,757,18],[700,727,20],[650,700,20],[600,665,22],[565,620,22],[547,570,24],[543,520,24],[560,470,24],[600,428,20],[650,400,18],[740,374,15],[810,362,16],[900,362,16],[1000,370,16],[1080,385,18],[1200,425,20]] },
  { o: [500, 240], s: [3, 3], p: [[160,455,16],[240,508,22],[310,560,18],[370,625,22],[410,685,20],[440,760,26],[452,830,26],[445,900,28],[415,965,28],[365,1025,26],[290,1075,20],[200,1105,22],[100,1125,18],[0,1127,22]] },
  { o: [130, 240], s: [3, 3], p: [[1010,1113,20],[900,1087,24],[780,1045,22],[640,982,26],[560,930,20],[480,865,24],[400,785,22],[330,680,28],[300,610,30],[286,530,44],[300,450,36],[330,395,34],[390,330,28],[470,287,26],[560,252,24],[680,228,24],[830,220,20],[960,230,26],[1100,252,20],[1210,282,32]] },
  { o: [500, 240], s: [3, 3], p: [[220,318,24],[300,357,28],[380,402,30],[460,455,26],[530,525,28],[590,590,38],[640,655,28],[685,750,38],[706,850,34],[707,930,36],[695,1020,42],[660,1090,38],[605,1160,42],[510,1240,40],[415,1290,44],[325,1325,40],[200,1352,38],[80,1362,38],[-30,1360,38]] },
  { o: [130, 240], s: [3, 3], p: [[1020,1342,30],[980,1323,20],[960,1312,16]] }
];
const pts = runs.flatMap(r => r.p.map(([x, y, w]) => [r.o[0] + x / r.s[0], r.o[1] + y / r.s[1], w / 3]));

// Catmull-Rom interpolation over position and width.
const spline = (a, b, c, d, t) =>
  0.5 * (2 * b + (c - a) * t + (2 * a - 5 * b + 4 * c - d) * t * t + (3 * b - a - 3 * c + d) * t * t * t);
const fine = [];
for (let i = 0; i < pts.length - 1; i++) {
  const q = [pts[Math.max(i - 1, 0)], pts[i], pts[i + 1], pts[Math.min(i + 2, pts.length - 1)]];
  for (let k = 0; k < 6; k++) {
    fine.push([0, 1, 2].map(n => spline(q[0][n], q[1][n], q[2][n], q[3][n], k / 6)));
  }
}
fine.push(pts[pts.length - 1]);

const left = [], right = [];
fine.forEach(([x, y, w], i) => {
  const a = fine[Math.max(i - 1, 0)], b = fine[Math.min(i + 1, fine.length - 1)];
  const dx = b[0] - a[0], dy = b[1] - a[1], l = Math.hypot(dx, dy) || 1;
  const nx = -dy / l * w / 2, ny = dx / l * w / 2;
  left.push([x + nx, y + ny]);
  right.push([x - nx, y - ny]);
});
const pair = p => p[0].toFixed(1) + " " + p[1].toFixed(1);
let d = "";
for (let i = 0; i < left.length - 1; i++) {
  d += `M${pair(left[i])}L${pair(left[i + 1])}L${pair(right[i + 1])}L${pair(right[i])}z`;
}
const trace = document.getElementById("trace");
trace.setAttribute("d", d);
trace.setAttribute("stroke", "#00ff00");
trace.setAttribute("stroke-width", "0.5");

// Axes, grid and tick labels.
const xs = [56.5, 135.5, 214.5, 292.5, 371.5, 450.5, 529.5, 608.5, 687.5, 765.5, 844.5, 923.5];
const ys = [183.5, 268.5, 353.5, 437.5, 522.5, 607.5, 692.5, 776.5, 861.5, 946.5];
let grid = "", labels = "";
xs.forEach((x, i) => {
  if (i > 0 && i < 11) grid += `<path d="M${x} 184V946" stroke="#808080" stroke-dasharray="4 3"/>`;
  grid += `<path d="M${x} 946V955" stroke="#b4b4b4"/>`;
  labels += `<text x="${x}" y="970" class="mid">${600 + i * 10}mV</text>`;
});
ys.forEach((y, i) => {
  if (i > 0 && i < 9) grid += `<path d="M57 ${y}H923" stroke="#808080" stroke-dasharray="4 3"/>`;
  grid += `<path d="M48 ${y}H57" stroke="#b4b4b4"/>`;
  labels += `<text x="13" y="${y + 5.5}">${(2 - i * 0.2).toFixed(1)}V</text>`;
});
grid += `<path d="M56.5 183.500H923.500V946.500H56.500z" fill="none" stroke="#b4b4b4"/>`;
document.getElementById("grid").innerHTML = grid;
document.getElementById("labels").innerHTML = labels;
```
